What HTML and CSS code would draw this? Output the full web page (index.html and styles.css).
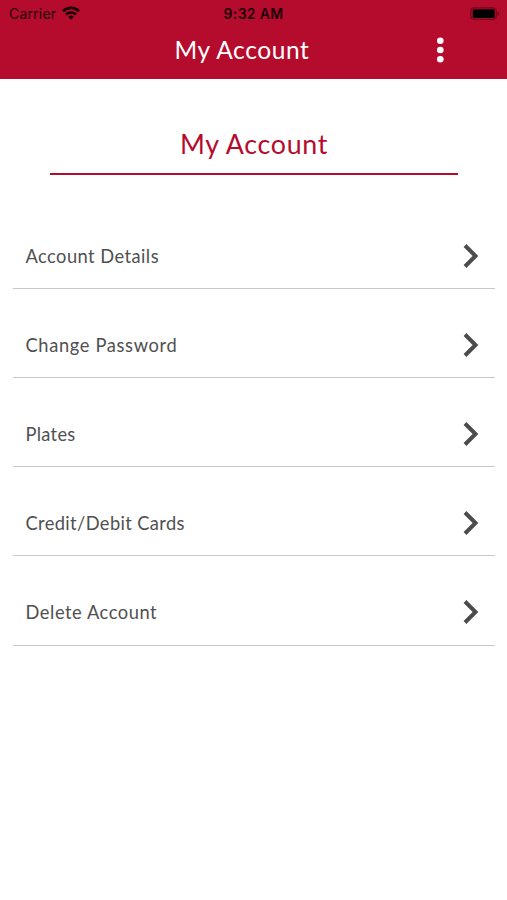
FILE: index.html
```html
<!DOCTYPE html>
<html lang="en">
<head>
    <meta charset="UTF-8">
    <meta name="viewport" content="width=device-width, initial-scale=1.0">
    <title>My Account</title>
    <link rel="stylesheet" href="styles.css">
</head>
<body>

<header>
    <div class="status-bar">
        <div class="carrier">
            <span class="carrier-name">Carrier</span>
            <svg class="wifi" width="18" height="14" viewBox="0 0 18 14">
                <path d="M1 5.2a11.4 11.4 0 0 1 16 0" fill="none" stroke="#1c0006" stroke-width="2.8"/>
                <path d="M4 8.5a7.2 7.2 0 0 1 10 0" fill="none" stroke="#1c0006" stroke-width="2.6"/>
                <path d="M6.2 10.8a4.2 4.2 0 0 1 5.6 0L9 13.7z" fill="#1c0006"/>
            </svg>
        </div>
        <span class="time">9:32 AM</span>
        <svg class="battery" width="31" height="14" viewBox="0 0 31 14">
            <rect x="1.9" y="0.8" width="25.4" height="11.6" rx="3.4" fill="none" stroke="#760319" stroke-width="1.2"/>
            <rect x="3.7" y="2.2" width="22" height="8.8" rx="1.6" fill="#000"/>
            <path d="M28.6 4.4a2.4 2.4 0 0 1 0 4.6z" fill="#760319"/>
        </svg>
    </div>
    <div class="nav-bar">
        <h1>My Account</h1>
        <button class="menu-btn" aria-label="Menu">
            <svg width="8" height="26" viewBox="0 0 8 26">
                <circle cx="4.3" cy="3.8" r="3.3" fill="#fff"/>
                <circle cx="4.3" cy="13" r="3.3" fill="#fff"/>
                <circle cx="4.3" cy="22.2" r="3.3" fill="#fff"/>
            </svg>
        </button>
    </div>
</header>

<main>
    <h2>My Account</h2>
    <ul class="menu">
        <li>
            <span class="details">Account Details</span>
            <svg class="chevron" viewBox="0 0 16 26"><path d="M2 2.5L12.5 13L2 23.5"/></svg>
        </li>
        <li>
            <span class="password">Change Password</span>
            <svg class="chevron" viewBox="0 0 16 26"><path d="M2 2.5L12.5 13L2 23.5"/></svg>
        </li>
        <li>
            <span class="plates">Plates</span>
            <svg class="chevron" viewBox="0 0 16 26"><path d="M2 2.5L12.5 13L2 23.5"/></svg>
        </li>
        <li>
            <span class="cards">Credit/Debit Cards</span>
            <svg class="chevron" viewBox="0 0 16 26"><path d="M2 2.5L12.5 13L2 23.5"/></svg>
        </li>
        <li>
            <span class="delete">Delete Account</span>
            <svg class="chevron" viewBox="0 0 16 26"><path d="M2 2.5L12.5 13L2 23.5"/></svg>
        </li>
    </ul>
</main>

</body>
</html>
```
FILE: styles.css
```css
body {
    margin: 0;
    background: white;
    font-family: Lato, sans-serif;
}
header {
    height: 79px;
    background: #b50c2d;
    color: white;
}
.status-bar {
    display: grid;
    grid-template-columns: 1fr auto 1fr;
    align-items: center;
    height: 27px;
    padding: 0 7px 0 9px;
    font-family: Inter, sans-serif;
    font-size: 14px;
    color: #1c0006;
}
.carrier {
    display: flex;
    align-items: center;
    gap: 6px;
}
.carrier-name {
    letter-spacing: 0.2px;
}
.wifi {
    margin-bottom: 2px;
}
.time {
    margin-right: 2px;
    font-weight: 600;
    letter-spacing: 0.3px;
}
.battery {
    justify-self: end;
}
.nav-bar {
    display: grid;
    grid-template-columns: 1fr auto 1fr;
    align-items: center;
    height: 46px;
    padding: 0 63px 0 40px;
}
h1 {
    grid-column: 2;
    margin: 0 0 2px;
    font-size: 24.5px;
    font-weight: 400;
    letter-spacing: 0.6px;
}
.menu-btn {
    justify-self: end;
    display: flex;
    padding: 0;
    border: none;
    background: none;
    cursor: pointer;
}
h2 {
    height: 94px;
    margin: 0 49px 0 50px;
    border-bottom: 2px solid #b50c2d;
    color: #b50c2d;
    font-size: 26.8px;
    font-weight: 400;
    line-height: 130px;
    letter-spacing: 0.7px;
    text-align: center;
}
.menu {
    list-style: none;
    margin: 25px 12px 0 13px;
    padding: 0;
}
.menu li {
    display: flex;
    justify-content: space-between;
    align-items: center;
    box-sizing: border-box;
    height: 89.12px;
    padding: 23px 16px 0 12.5px;
    border-bottom: 1px solid #c8c8c8;
    color: #505050;
    font-size: 18.3px;
}
.details {
    letter-spacing: 0.45px;
}
.password {
    letter-spacing: 0.65px;
}
.plates {
    letter-spacing: 0.3px;
}
.cards {
    letter-spacing: 0.38px;
}
.delete {
    letter-spacing: 0.55px;
}
.chevron {
    width: 16px;
    height: 26px;
    fill: none;
    stroke: #4c4c4c;
    stroke-width: 4;
}
```
